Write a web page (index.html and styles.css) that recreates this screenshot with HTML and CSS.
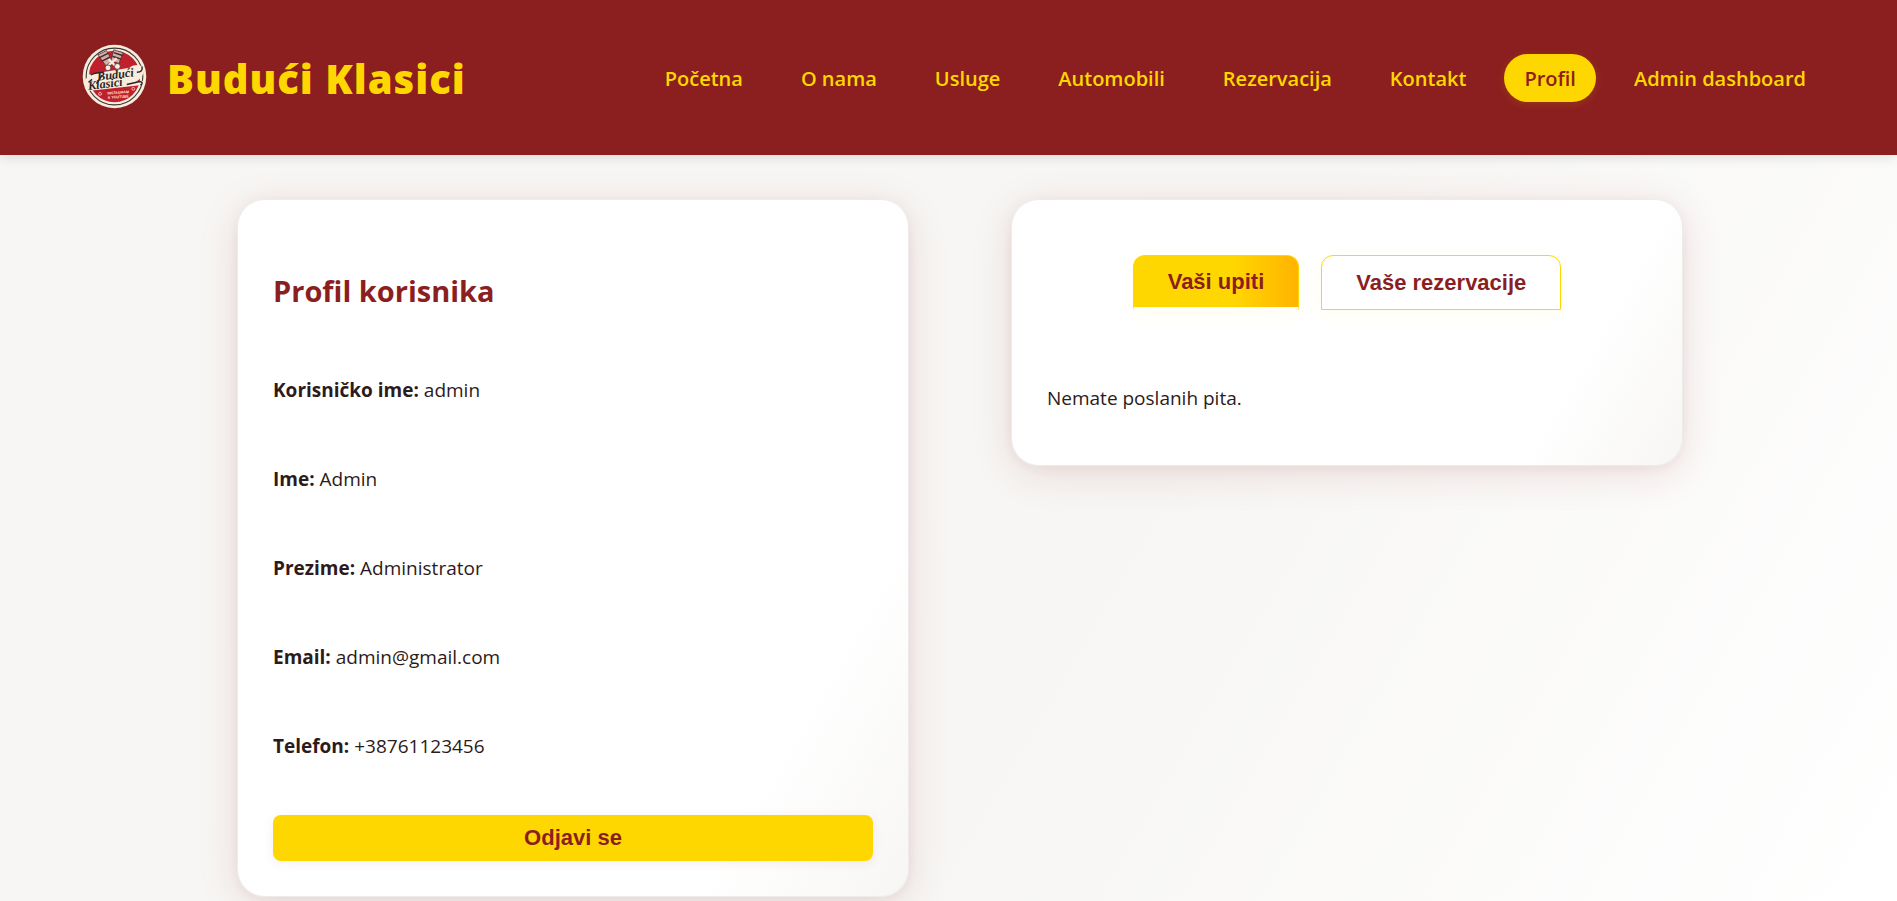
FILE: index.html
```html
<!DOCTYPE html>
<html lang="bs">
<head>
<meta charset="utf-8">
<meta name="viewport" content="width=device-width, initial-scale=1">
<title>Budući Klasici – Profil</title>
<link rel="stylesheet" href="styles.css">
</head>
<body>
<header class="site-header">
  <a class="brand" href="#">
    <svg class="brand-logo" viewBox="0 0 90 90" role="img" aria-label="Logo">
      <circle cx="45" cy="45" r="44" fill="#f8ecdc"/>
      <circle cx="45" cy="45" r="39" fill="#c01f2c" stroke="#3a3638" stroke-width="2"/>
      <circle cx="45" cy="45" r="37" fill="none" stroke="#f8ecdc" stroke-width="3"/>
      <path d="M3 52 L10 42 L66 33 Q68 29 78 29 L84 31 Q88 46 74 52 L84 51 Q86 56 80 57 L8 65 Z" fill="#f8ecdc"/>
      <g stroke="#3a2e30" stroke-width="1">
        <path d="M22 15 l12 -6 8 15 -9 6z" fill="#d9a9a4"/>
        <path d="M44 8 l13 4 -6 15 -11 -4z" fill="#d9a9a4"/>
        <path d="M24 19 l12 -6 M27 24 l12 -6 M44 12 l12 4 M42 17 l12 4" stroke-width="2"/>
        <path d="M35 31 L48 20 M48 32 L37 21" stroke="#f8ecdc" stroke-width="3"/>
        <circle cx="36" cy="33" r="4" fill="#f8ecdc"/>
        <circle cx="49" cy="31" r="4" fill="#f8ecdc"/>
      </g>
      <path d="M20 55 L28 43 M12 43 Q15 40 30 39 M76 39 Q85 39 83 31 M14 49 L9 53 M62 56 L80 52 Q86 53 81 57" fill="none" stroke="#282528" stroke-width="2"/>
      <g class="logo-script" fill="#282528" transform="rotate(-7 45 45)">
        <text x="21" y="48">Budući</text>
        <text x="7" y="59">Klasici</text>
      </g>
      <g class="logo-caption" fill="#f8ecdc" transform="rotate(-4 48 68)">
        <text x="50" y="69">INSTAGRAM</text>
        <text x="50" y="75">&amp; YOUTUBE</text>
      </g>
      <circle cx="25" cy="69" r="2" fill="none" stroke="#f8ecdc"/>
      <circle cx="71" cy="62" r="2" fill="none" stroke="#f8ecdc"/>
    </svg>
    <span class="brand-name">Budući Klasici</span>
  </a>
  <nav class="main-nav">
    <a href="#">Početna</a>
    <a href="#">O nama</a>
    <a href="#">Usluge</a>
    <a href="#">Automobili</a>
    <a href="#">Rezervacija</a>
    <a href="#">Kontakt</a>
    <a href="#" class="active" aria-current="page">Profil</a>
    <a href="#">Admin dashboard</a>
  </nav>
</header>
<main class="profile-page">
  <section class="card profile-card">
    <h1>Profil korisnika</h1>
    <p><strong>Korisničko ime:</strong> admin</p>
    <p><strong>Ime:</strong> Admin</p>
    <p><strong>Prezime:</strong> Administrator</p>
    <p><strong>Email:</strong> admin@gmail.com</p>
    <p><strong>Telefon:</strong> +38761123456</p>
    <button class="logout" type="button">Odjavi se</button>
  </section>
  <section class="card activity-card">
    <div class="tabs">
      <button class="tab tab-active" type="button">Vaši upiti</button>
      <button class="tab" type="button">Vaše rezervacije</button>
    </div>
    <p>Nemate poslanih pita.</p>
  </section>
</main>
</body>
</html>
```
FILE: styles.css
```css
* { box-sizing: border-box; }

body {
  margin: 0;
  min-height: 100vh;
  background: linear-gradient(120deg, #f8f6f4 0%, #f7f6f4 60%, #ffffff 100%);
  color: #2d1a1a;
  font-family: "Segoe UI", "Open Sans", "Noto Sans", sans-serif;
  font-size: 19px;
}

.site-header {
  position: relative;
  display: flex;
  align-items: center;
  justify-content: space-between;
  padding: 44px 71px 46px 82px;
  background: #8b1f1f;
  box-shadow: 0 2px 12px rgba(0, 0, 0, 0.12);
}

.brand {
  display: flex;
  align-items: center;
  gap: 20px;
  color: #ffd700;
  text-decoration: none;
}

.brand-logo { width: 65px; height: 65px; }
.logo-script { font: italic bold 17px "Liberation Serif", serif; }
.logo-caption { font: bold 5px "Liberation Sans", sans-serif; text-anchor: middle; }

.brand-name {
  padding-top: 4px;
  font-size: 40px;
  font-weight: 900;
  line-height: 50px;
  letter-spacing: 1px;
}

.main-nav {
  display: flex;
  gap: 18px;
  padding-top: 2px;
}

.main-nav a {
  padding: 11px 20px 9px;
  border-radius: 24px;
  color: #ffd700;
  font-size: 20px;
  font-weight: 600;
  line-height: 28px;
  text-decoration: none;
  white-space: nowrap;
}

.main-nav .active {
  background: #ffd700;
  color: #8b1f1f;
  box-shadow: 0 2px 8px rgba(255, 215, 0, 0.12);
}

.profile-page {
  display: grid;
  grid-template-columns: 1fr 1fr;
  align-items: start;
  gap: 102px;
  padding: 44px 214px 4px 237px;
}

.card {
  padding: 0 35px;
  border: 1px solid #ececec;
  border-radius: 28px;
  background: linear-gradient(120deg, #ffffff 80%, #f7f6f4 100%);
  box-shadow:
    0 8px 40px rgba(139, 31, 31, 0.13),
    0 2px 12px rgba(139, 31, 31, 0.06);
}

.profile-card { padding-bottom: 35px; }

.profile-card h1 {
  margin: 71px 0 65px;
  color: #8b1f1f;
  font-size: 29px;
  line-height: 40px;
}

.card p {
  margin: 0 0 61px;
  line-height: 28px;
}

.profile-card p:last-of-type { margin-bottom: 55px; }

.logout {
  width: 100%;
  height: 46px;
  border: 0;
  border-radius: 8px;
  background: #ffd700;
  color: #8b1f1f;
  font: bold 22px "Liberation Sans", Arial, sans-serif;
  box-shadow: 0 2px 12px rgba(139, 31, 31, 0.08);
}

.tabs {
  display: flex;
  justify-content: center;
  gap: 22px;
  margin: 55px 0 74px;
}

.tab {
  height: 55px;
  padding: 0 34px;
  border: 1px solid #ffd700;
  border-radius: 12px 12px 0 0;
  background: #ffffff;
  color: #8b1f1f;
  font: bold 22px "Liberation Sans", Arial, sans-serif;
  box-shadow: 0 4px 16px rgba(255, 215, 0, 0.08);
}

.tab-active {
  border-bottom: 3px solid #ffffff;
  background: linear-gradient(90deg, #ffd700 60%, #ffb300 100%);
}

.activity-card p { margin-bottom: 53px; }
```
